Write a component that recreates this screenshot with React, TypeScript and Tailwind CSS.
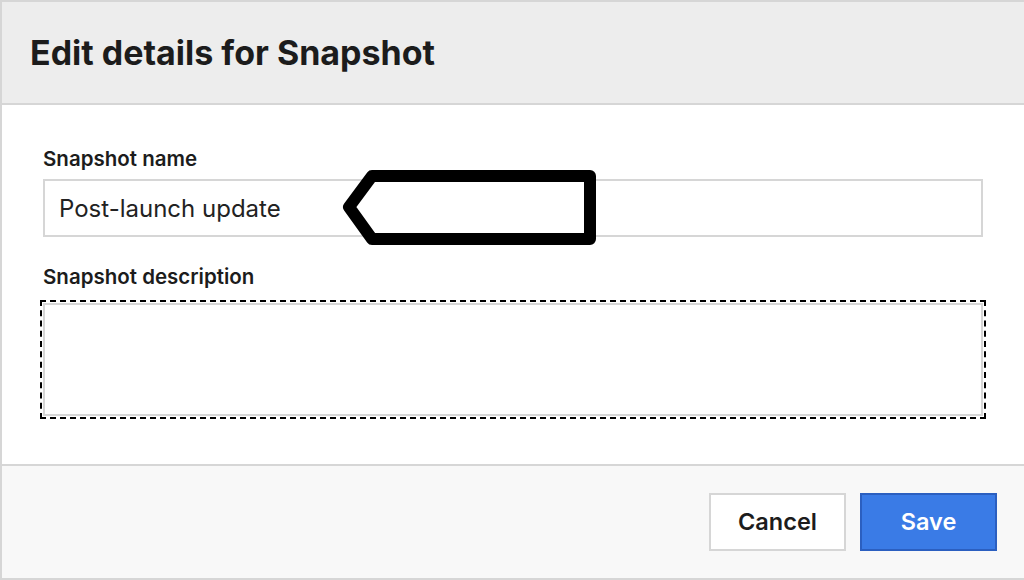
import React from "react";

// Dialog for editing a snapshot's name and description

const Arrow = () => (
  <svg
    className="absolute left-0 top-0 pointer-events-none"
    width="1024"
    height="580"
    viewBox="0 0 1024 580"
  >
    <polygon
      points="372,176 590,176 590,239 372,239 349,207"
      fill="white"
      stroke="black"
      strokeWidth="12"
      strokeLinejoin="round"
    />
  </svg>
);

const App = () => {
  return (
    <div className="relative w-[1024px] h-[580px] overflow-hidden bg-white font-['Inter','Liberation_Sans',sans-serif] text-[#1c1c1c]">
      <div className="flex flex-col h-full border-l-2 border-t-2 border-b-2 border-[#d6d6d6]">
        <div className="h-[103px] shrink-0 flex items-center px-[28px] bg-[#ededed] border-b-2 border-[#d6d6d6]">
          <h1 className="text-[34px] font-bold">Edit details for Snapshot</h1>
        </div>

        <div className="flex flex-col px-[41px] pt-[42px] pb-[48px] bg-white">
          <label className="text-[20.5px] font-semibold leading-[24px]">Snapshot name</label>
          <input
            className="mt-[8px] h-[58px] w-[940px] border-2 border-[#d6d6d6] px-[14px] text-[24px] outline-none text-[#222]"
            defaultValue="Post-launch update"
          />
          <label className="mt-[28px] text-[20.5px] font-semibold leading-[24px]">Snapshot description</label>
          <textarea className="mt-[14px] h-[113px] w-[940px] resize-none border-2 border-[#d6d6d6] outline-2 outline-dashed outline-black outline-offset-[1px]" />
        </div>

        <div className="flex flex-1 items-start justify-end gap-[14px] pt-[27px] pr-[27px] bg-[#f8f8f8] border-t-2 border-[#d6d6d6]">
          <button className="h-[58px] w-[137px] bg-white border-2 border-[#d6d6d6] text-[23.5px] font-semibold text-[#1c1c1c]">
            Cancel
          </button>
          <button className="h-[58px] w-[137px] bg-[#3a7be6] border-2 border-[#2b5fc0] text-[23.5px] font-semibold text-white">
            Save
          </button>
        </div>
      </div>
      <Arrow />
    </div>
  );
};

export default App;
